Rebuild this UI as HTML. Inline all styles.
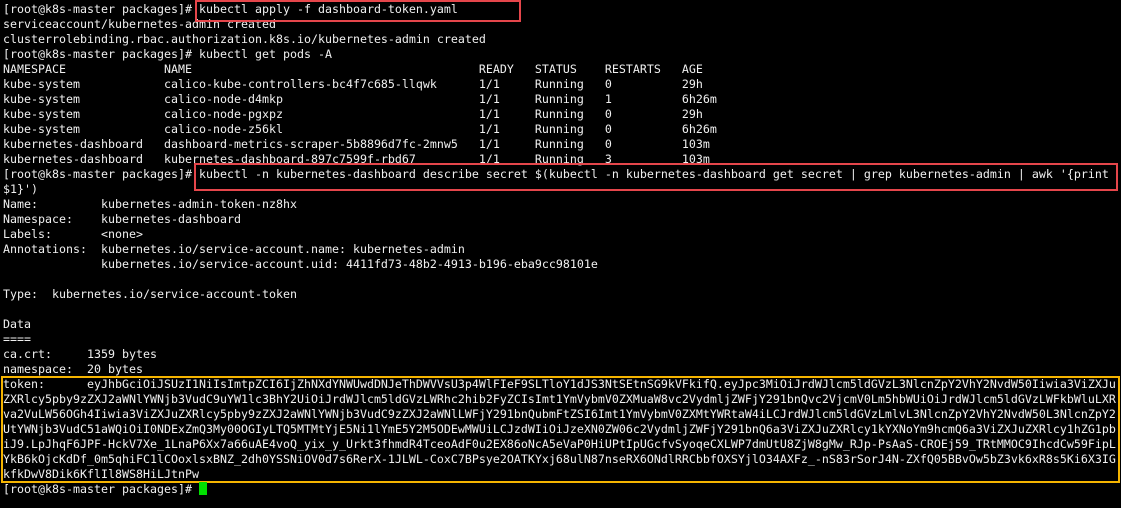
<!DOCTYPE html>
<html><head><meta charset="utf-8"><style>
html,body{margin:0;padding:0;background:#000;width:1121px;height:508px;overflow:hidden}
pre{position:absolute;left:3px;top:2px;margin:0;font-family:"DejaVu Sans Mono","Liberation Mono",monospace;font-size:11.63px;line-height:15px;color:#f0f0f0;white-space:pre}
.b{position:absolute;box-sizing:border-box;border:2px solid}
.r{border-color:#e5464b}
.y{border-color:#f5b400}
.cur{position:absolute;left:199px;top:482px;width:8px;height:13px;background:#00e000}
</style></head><body>
<pre>[root@k8s-master packages]# kubectl apply -f dashboard-token.yaml
serviceaccount/kubernetes-admin created
clusterrolebinding.rbac.authorization.k8s.io/kubernetes-admin created
[root@k8s-master packages]# kubectl get pods -A
NAMESPACE              NAME                                         READY   STATUS    RESTARTS   AGE
kube-system            calico-kube-controllers-bc4f7c685-llqwk      1/1     Running   0          29h
kube-system            calico-node-d4mkp                            1/1     Running   1          6h26m
kube-system            calico-node-pgxpz                            1/1     Running   0          29h
kube-system            calico-node-z56kl                            1/1     Running   0          6h26m
kubernetes-dashboard   dashboard-metrics-scraper-5b8896d7fc-2mnw5   1/1     Running   0          103m
kubernetes-dashboard   kubernetes-dashboard-897c7599f-rbd67         1/1     Running   3          103m
[root@k8s-master packages]# kubectl -n kubernetes-dashboard describe secret $(kubectl -n kubernetes-dashboard get secret | grep kubernetes-admin | awk '{print
$1}')
Name:         kubernetes-admin-token-nz8hx
Namespace:    kubernetes-dashboard
Labels:       &lt;none&gt;
Annotations:  kubernetes.io/service-account.name: kubernetes-admin
              kubernetes.io/service-account.uid: 4411fd73-48b2-4913-b196-eba9cc98101e

Type:  kubernetes.io/service-account-token

Data
====
ca.crt:     1359 bytes
namespace:  20 bytes
token:      eyJhbGciOiJSUzI1NiIsImtpZCI6IjZhNXdYNWUwdDNJeThDWVVsU3p4WlFIeF9SLTloY1dJS3NtSEtnSG9kVFkifQ.eyJpc3MiOiJrdWJlcm5ldGVzL3NlcnZpY2VhY2NvdW50Iiwia3ViZXJu
ZXRlcy5pby9zZXJ2aWNlYWNjb3VudC9uYW1lc3BhY2UiOiJrdWJlcm5ldGVzLWRhc2hib2FyZCIsImt1YmVybmV0ZXMuaW8vc2VydmljZWFjY291bnQvc2VjcmV0Lm5hbWUiOiJrdWJlcm5ldGVzLWFkbWluLXR
va2VuLW56OGh4Iiwia3ViZXJuZXRlcy5pby9zZXJ2aWNlYWNjb3VudC9zZXJ2aWNlLWFjY291bnQubmFtZSI6Imt1YmVybmV0ZXMtYWRtaW4iLCJrdWJlcm5ldGVzLmlvL3NlcnZpY2VhY2NvdW50L3NlcnZpY2
UtYWNjb3VudC51aWQiOiI0NDExZmQ3My00OGIyLTQ5MTMtYjE5Ni1lYmE5Y2M5ODEwMWUiLCJzdWIiOiJzeXN0ZW06c2VydmljZWFjY291bnQ6a3ViZXJuZXRlcy1kYXNoYm9hcmQ6a3ViZXJuZXRlcy1hZG1pb
iJ9.LpJhqF6JPF-HckV7Xe_1LnaP6Xx7a66uAE4voQ_yix_y_Urkt3fhmdR4TceoAdF0u2EX86oNcA5eVaP0HiUPtIpUGcfvSyoqeCXLWP7dmUtU8ZjW8gMw_RJp-PsAaS-CROEj59_TRtMMOC9IhcdCw59FipL
YkB6kOjcKdDf_0m5qhiFC1lCOoxlsxBNZ_2dh0YSSNiOV0d7s6RerX-1JLWL-CoxC7BPsye2OATKYxj68ulN87nseRX6ONdlRRCbbfOXSYjlO34AXFz_-nS83rSorJ4N-ZXfQ05BBvOw5bZ3vk6xR8s5Ki6X3IG
kfkDwV8Dik6KflIl8WS8HiLJtnPw
[root@k8s-master packages]# </pre>
<div class="b r" style="left:195px;top:0;width:326px;height:22px"></div>
<div class="b r" style="left:194px;top:163px;width:924px;height:28px"></div>
<div class="b y" style="left:1px;top:376px;width:1119px;height:107px"></div>
<div class="cur"></div>
</body></html>
